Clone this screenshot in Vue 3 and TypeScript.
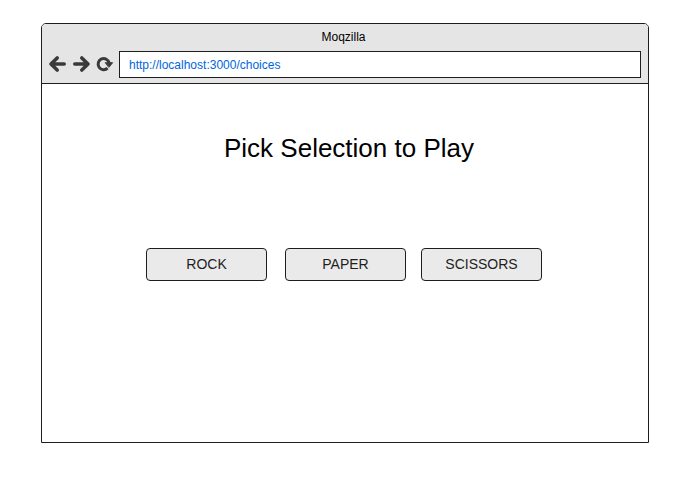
<script setup lang="ts">
const title: string = 'Moqzilla'
const url: string = 'http://localhost:3000/choices'
const choices: string[] = ['ROCK', 'PAPER', 'SCISSORS']
</script>

<template>
  <main class="stage">
    <section class="browser">
      <header class="chrome">
        <div class="title">{{ title }}</div>
        <div class="toolbar">
          <svg class="nav" width="66" height="21" viewBox="0 0 66 21" fill="none" stroke="#3a3a3d" stroke-width="3.6" stroke-linecap="round" stroke-linejoin="round">
            <path d="M9.2 4 3 10l6.2 6M4 10H16.2" />
            <path d="M33.8 4 40 10l-6.2 6M39 10H26.8" />
            <path d="M59.6 14.2A5.6 5.6 0 1 1 61.2 9" stroke-width="3" stroke-linecap="butt" />
            <path d="M57.6 8.7h7l-3.5 4.4z" fill="#3a3a3d" stroke-width="1" />
          </svg>
          <div class="address"><a class="link">{{ url }}</a></div>
        </div>
      </header>
      <div class="page">
        <h1 class="heading">Pick Selection to Play</h1>
        <div class="choices">
          <button v-for="choice in choices" :key="choice" class="choice" type="button">{{ choice }}</button>
        </div>
      </div>
    </section>
  </main>
</template>

<style>
body {
  background: #fff;
}
</style>

<style scoped>
.stage {
  box-sizing: border-box;
  height: 478px;
  padding: 23px 41px 0;
  font-family: "Liberation Sans", Arial, sans-serif;
}
.browser {
  box-sizing: border-box;
  width: 608px;
  height: 420px;
  border: 1px solid #1e1e21;
  border-radius: 5px 5px 0 0;
  overflow: hidden;
}
.chrome {
  box-sizing: border-box;
  height: 60px;
  border-bottom: 1px solid #1e1e21;
  background: #e5e5e5;
}
.title {
  height: 27px;
  line-height: 26px;
  padding-right: 3px;
  text-align: center;
  font-size: 12px;
  color: #000;
}
.toolbar {
  display: flex;
  align-items: center;
  padding: 0 7px 0 6px;
}
.nav {
  flex: none;
  margin-right: 5px;
}
.address {
  box-sizing: border-box;
  flex: 1;
  height: 27px;
  border: 1px solid #1e1e21;
  background: #fff;
  padding-left: 9px;
  line-height: 26px;
  font-size: 12px;
}
.link {
  color: #0066dd;
}
.heading {
  margin: 0;
  padding: 49px 0 0 8px;
  line-height: 30px;
  text-align: center;
  font-size: 26px;
  font-weight: 400;
  color: #000;
}
.choices {
  display: flex;
  padding: 85px 0 0 104px;
}
.choice {
  box-sizing: border-box;
  width: 121px;
  height: 33px;
  margin: 0 18px 0 0;
  padding: 0;
  border: 1px solid #1e1e21;
  border-radius: 4px;
  background: #eaeaea;
  color: #1e1e21;
  font: 14px/31px "Liberation Sans", Arial, sans-serif;
}
.choice:nth-child(2) {
  margin-right: 15px;
}
</style>
